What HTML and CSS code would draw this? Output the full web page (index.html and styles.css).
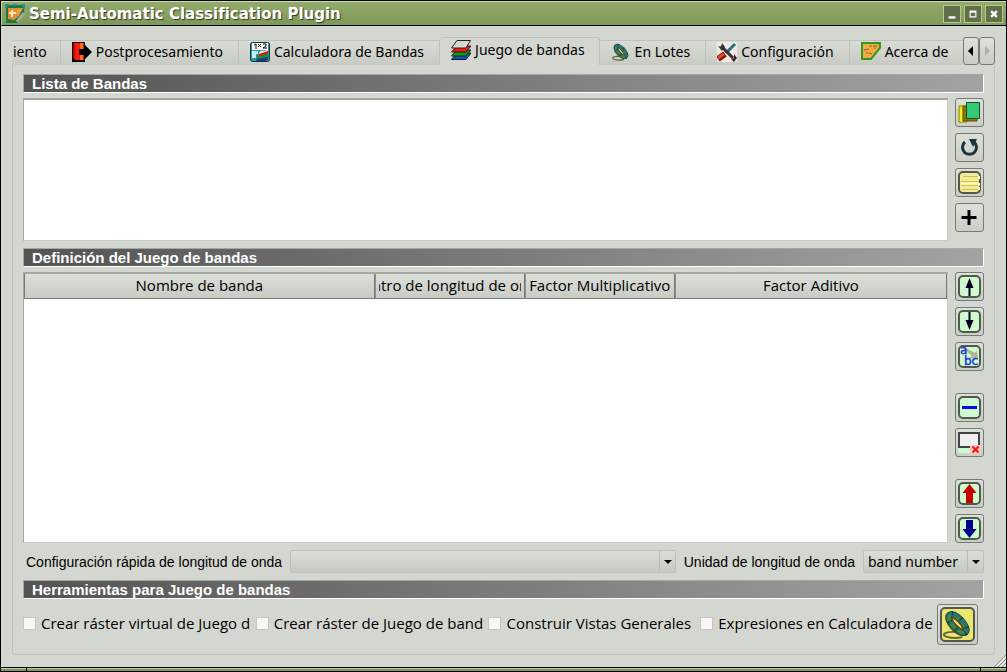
FILE: index.html
```html
<!DOCTYPE html>
<html lang="es">
<head>
<meta charset="utf-8">
<title>Semi-Automatic Classification Plugin</title>
<link rel="stylesheet" href="styles.css">
</head>
<body>
<svg class="defs" aria-hidden="true">
  <defs>
    <linearGradient id="door"><stop offset="0" stop-color="#b00000"/><stop offset=".35" stop-color="#ff2010"/><stop offset="1" stop-color="#e01000"/></linearGradient>
    <symbol id="chain" viewBox="0 0 34 34">
      <path d="M22 30c-9 2-20 0-19-3 1-2 8-3 15-2" fill="none" stroke="#66663f" stroke-width="2"/>
      <g transform="rotate(47 17 16)" fill="none">
        <ellipse cx="17" cy="17" rx="12" ry="5" stroke="#a33f16" stroke-width="6"/>
        <ellipse cx="17" cy="16" rx="12" ry="5" stroke="#1c5245" stroke-width="7"/>
        <ellipse cx="17" cy="16" rx="12" ry="5" stroke="#28727c" stroke-width="5"/>
        <ellipse cx="17" cy="17" rx="11" ry="4" stroke="#3b8f2c" stroke-width="3" stroke-dasharray="7 3"/>
        <ellipse cx="17" cy="16" rx="12" ry="5" stroke="#173c36" stroke-width="7" stroke-dasharray="1 9"/>
        <ellipse cx="17" cy="16" rx="9" ry="2" stroke="#7c3a16" stroke-width="1"/>
      </g>
    </symbol>
  </defs>
</svg>
<div class="window">
  <header class="titlebar">
    <svg class="app-icon" viewBox="0 0 20 20"><path d="M1 1h18v10l-6 8H1z" fill="#24763b"/><path d="M1 4V1h3M8 1h4M16 1h3v4" fill="none" stroke="#1b91a4" stroke-width="2"/><path d="M3 4h15l-4 8-5 4-6-1z" fill="#dd913b"/><path d="M7 6v7M4 9h7" stroke="#ffe5b4" stroke-width="2"/><path d="M12 7l4-1M12 9l2 1" stroke="#f6c35d" stroke-width="1"/><path d="M19 9l-7 9" stroke="#a3aca0" stroke-width="3"/></svg>
    <h1 class="title">Semi-Automatic Classification Plugin</h1>
    <div class="window-buttons">
      <button class="wbtn" aria-label="Minimizar"><svg viewBox="0 0 14 14"><path d="M4 9h6v2H4z" fill="#fff"/></svg></button>
      <button class="wbtn" aria-label="Maximizar"><svg viewBox="0 0 14 14"><path d="M4 4h6v6H4zM5 6v3h4V6z" fill="#fff" fill-rule="evenodd"/></svg></button>
      <button class="wbtn" aria-label="Cerrar"><svg viewBox="0 0 14 14"><path d="M4.500 4.500l5 5M9.500 4.500l-5 5" stroke="#fff" stroke-width="2"/></svg></button>
    </div>
  </header>

  <main class="content">
    <nav class="tabbar">
      <div class="tabs" role="tablist">
        <button class="tab tab-cut" role="tab">iento</button>
        <button class="tab" role="tab"><svg class="tab-icon" viewBox="0 0 20 20"><path d="M0 0h13v20H0z" fill="#000"/><path d="M1 1h11v17H3L1 16z" fill="url(#door)"/><path d="M8 1h3v17H8z" fill="#ff6a1c"/><path d="M7 7h6V3l7 7-7 7v-4H7z" fill="#000"/></svg>Postprocesamiento</button>
        <button class="tab" role="tab"><svg class="tab-icon" viewBox="0 0 20 20"><rect x=".5" y=".5" width="19" height="19" rx="2" fill="#2b93a9" stroke="#14343e"/><path d="M2 1h16v7H2z" fill="#f6f7ee"/><path d="M4 3l2-1v5M8 2l3 3M11 2L8 5M13 2h3v2l-3 2h4" fill="none" stroke="#111"/><path d="M2 9h6v3H6v4H2z" fill="#c5edf3"/><path d="M10 9l8-1v4l-3 2H8z" fill="#e8e8e8"/><path d="M9 12l9-3v3l-3 3H7z" fill="#c82118"/><path d="M8 14l10-2v3l-4 2H6z" fill="#228a2c"/><path d="M7 17l11-2v3l-3 1H6z" fill="#143e91"/></svg>Calculadora de Bandas</button>
        <button class="tab tab-active" role="tab" aria-selected="true"><svg class="tab-icon" viewBox="0 0 20 20"><path d="M6 13h14l-5 6.500H.5z" fill="#1553b5" stroke="#071c3c"/><path d="M6 10h14l-5 6H.5z" fill="#139a20" stroke="#06320b"/><path d="M6 6h14l-5 6H.5z" fill="#ee1c16" stroke="#4b0b09"/><path d="M6 .5h13.500L15 8H.5z" fill="#d6d8d5" stroke="#222"/></svg>Juego de bandas</button>
        <button class="tab" role="tab"><svg class="tab-icon" viewBox="0 0 34 34"><use href="#chain"/></svg>En Lotes</button>
        <button class="tab" role="tab"><svg class="tab-icon" viewBox="0 0 20 20"><rect width="20" height="20" fill="#efe8e4"/><path d="M18 2L9 11" stroke="#267278" stroke-width="3"/><path d="M4 4l12 12" stroke="#3a2c30" stroke-width="3"/><path d="M1 4l3 1 1-4 3 4-3 4zM14 17l3-1v-4l3 4-3 4z" fill="#3a2c30"/><path d="M8 12l-7 5" stroke="#7b170e" stroke-width="6"/><path d="M7 12l-6 4" stroke="#df4d1c" stroke-width="3"/></svg>Configuración</button>
        <button class="tab tab-last" role="tab"><svg class="tab-icon" viewBox="0 0 20 20"><path d="M1 1h18v5l-9 11H1z" fill="#f0ac43" stroke="#35951d" stroke-width="2"/><path d="M3 8l5-1M8 4h3M12 4h4M5 11h2M8 11l3 1M13 6h2" stroke="#88653a" stroke-width="1"/></svg>Acerca de</button>
      </div>
      <button class="scroll" aria-label="Pestañas anteriores"><svg viewBox="0 0 8 10"><path d="M6 0v10L1 5z"/></svg></button>
      <button class="scroll" aria-label="Pestañas siguientes" disabled><svg viewBox="0 0 8 10"><path d="M2 0v10l5-5z" fill="#aeb1a9"/></svg></button>
    </nav>

    <section class="panel">
      <h2 class="section-title">Lista de Bandas</h2>
      <div class="block list-block">
        <div class="view" role="listbox" aria-label="Lista de Bandas"></div>
        <div class="tools">
          <button class="tool" aria-label="Seleccionar todo"><svg viewBox="0 0 23 23"><path d="M1 5h8v16H1z" fill="#e9e600" stroke="#8a8300"/><path d="M3 9v12" stroke="#fff76a"/><path d="M5 5h14v15H5z" fill="#8b7700" stroke="#5f5100"/><path d="M8.500 1.500h13v16h-13z" fill="#38c774" stroke="#13522e"/></svg></button>
          <button class="tool" aria-label="Actualizar"><svg viewBox="0 0 23 23"><path d="M7 6a7 7 0 1 0 9 0" fill="none" stroke="#1d333b" stroke-width="3"/><path d="M11 3h8l-4 8z" fill="#1d333b"/></svg></button>
          <button class="tool" aria-label="Añadir bandas"><svg viewBox="0 0 23 23"><rect x="1" y="1" width="21" height="21" rx="4" fill="#f2ec98" stroke="#55564e" stroke-width="2"/><path d="M5 5.500h15M3 10.500h18M3 14.500h17M4 18.500h16" stroke="#d3bd4c" stroke-width="1"/><path d="M3 12.500h16M21 5v3M21 12v3M21 16v3" stroke="#fffab9" stroke-width="2"/></svg></button>
          <button class="tool" aria-label="Añadir"><svg viewBox="0 0 23 23"><path d="M11 4v15M3.500 11.500h15" stroke="#000" stroke-width="3"/></svg></button>
        </div>
      </div>

      <h2 class="section-title">Definición del Juego de bandas</h2>
      <div class="block table-block">
        <div class="view">
          <table class="bands">
            <thead><tr>
              <th class="col-name"><div class="th-text"><span>Nombre de banda</span></div></th>
              <th class="col-mid"><div class="th-text"><span>Centro de longitud de onda</span></div></th>
              <th class="col-mid"><div class="th-text"><span>Factor Multiplicativo</span></div></th>
              <th><div class="th-text"><span>Factor Aditivo</span></div></th>
            </tr></thead>
          </table>
        </div>
        <div class="tools tools-split">
          <div class="tool-group">
            <button class="tool" aria-label="Subir banda"><svg viewBox="0 0 23 23"><rect class="mint" x="1" y="1" width="21" height="21" rx="4"/><path d="M11.500 21V8" stroke="#000022" stroke-width="2"/><path d="M11.500 3l4 10h-8z" fill="#000022"/></svg></button>
            <button class="tool" aria-label="Bajar banda"><svg viewBox="0 0 23 23"><rect class="mint" x="1" y="1" width="21" height="21" rx="4"/><path d="M11.500 2v13" stroke="#000022" stroke-width="2"/><path d="M11.500 20l4-10h-8z" fill="#000022"/></svg></button>
            <button class="tool" aria-label="Ordenar por nombre"><svg viewBox="0 0 23 23"><rect class="mint" x="1" y="1" width="21" height="21" rx="4"/><path d="M8 3l9 5 2-3 1 9-9-1 3-2-7-6z" fill="#b3b49b"/><text x="2" y="9" class="abc">a</text><text x="6" y="20" class="abc">bc</text></svg></button>
          </div>
          <div class="tool-group">
            <button class="tool" aria-label="Quitar banda"><svg viewBox="0 0 23 23"><rect class="mint" x="1" y="1" width="21" height="21" rx="4"/><path d="M4 11.500h15" stroke="#0808f2" stroke-width="3"/></svg></button>
            <button class="tool" aria-label="Borrar todo"><svg viewBox="0 0 23 23"><path d="M0 16h12v6H0z" fill="#cdf9cd"/><path d="M1 2h20v14H1z" fill="#f0f0f0" stroke="#444" stroke-width="2"/><path d="M12 14h11v9H12z" fill="#fac6b8"/><path d="M14.500 15.500l6 6M20.500 15.500l-6 6" stroke="#e71b1b" stroke-width="2"/></svg></button>
          </div>
          <div class="tool-group">
            <button class="tool" aria-label="Importar"><svg viewBox="0 0 23 23"><rect class="mint" x="1" y="1" width="21" height="21" rx="4"/><path d="M11.500 2l7 9H15v10H8V11H4.500z" fill="#c40000"/></svg></button>
            <button class="tool" aria-label="Exportar"><svg viewBox="0 0 23 23"><rect class="mint" x="1" y="1" width="21" height="21" rx="4"/><path d="M11.500 21l7-9H15V3H8v9H4.500z" fill="#000090"/></svg></button>
          </div>
        </div>
      </div>

      <div class="settings">
        <label for="quick">Configuración rápida de longitud de onda</label>
        <span class="combo combo-wide"><select id="quick"><option></option></select></span>
        <label for="unit">Unidad de longitud de onda</label>
        <span class="combo combo-unit"><select id="unit"><option>band number</option></select></span>
      </div>

      <h2 class="section-title">Herramientas para Juego de bandas</h2>
      <div class="actions">
        <div class="checks">
          <label class="check"><input type="checkbox">Crear ráster virtual de Juego d</label>
          <label class="check"><input type="checkbox">Crear ráster de Juego de band</label>
          <label class="check"><input type="checkbox">Construir Vistas Generales</label>
          <label class="check"><input type="checkbox">Expresiones en Calculadora de</label>
        </div>
        <button class="tool run" aria-label="Ejecutar"><svg viewBox="0 0 35 35"><rect x="1" y="1" width="33" height="33" rx="4" fill="#ebe66e" stroke="#55564e" stroke-width="2"/><use href="#chain" x="1" y="1" width="33" height="33"/></svg></button>
      </div>
    </section>
    <svg class="grip" viewBox="0 0 12 12"><path d="M0 12L12 0M4 12l8-8M8 12l4-4" stroke="#8d9089"/><path d="M2 12L12 2M6 12l6-6M10 12l2-2" stroke="#fff"/></svg>
  </main>
  <footer class="frame-bottom"><span></span><span></span><span></span></footer>
</div>
</body>
</html>
```
FILE: styles.css
```css
* { box-sizing: border-box; }
body { margin: 0; background: #d4d7d0; color: #000; font-family: "Open Sans", "Noto Sans", sans-serif; font-size: 15px; }
button { margin: 0; padding: 0; font: inherit; color: inherit; }
svg { display: block; }
.defs { position: absolute; width: 0; height: 0; }
.window { display: flex; flex-direction: column; min-height: 100vh; border: 1px solid #000; background: #d4d7d0; }

.titlebar { display: flex; align-items: center; height: 25px; padding: 0 3px; gap: 4px; border-top: 1px solid #c9dda4; border-bottom: 1px solid #000; border-left: 1px solid #b8d18f; background: linear-gradient(#93ab6c, #7e985b); }
.app-icon { width: 20px; height: 20px; }
.title { flex: 1; margin: 0; color: #fff; font: bold 15px/20px "DejaVu Sans", sans-serif; text-shadow: 1px 1px 1px #333b25; }
.window-buttons { display: flex; gap: 3px; }
.wbtn { width: 18px; height: 18px; border: 1px solid #b3cc8c; background: #606f49; }
.wbtn svg { width: 16px; height: 16px; }

.content { position: relative; flex: 1; display: flex; flex-direction: column; padding: 11px 11px 12px; }
.tabbar { display: flex; align-items: flex-end; height: 28px; }
.tabs { flex: 1; min-width: 0; display: flex; align-items: flex-end; height: 28px; overflow: hidden; }
.tab { flex: none; display: flex; align-items: center; gap: 4px; height: 25px; padding: 0 15px 3px 11px; border: 0; border-top: 1px solid #bfc2ba; border-right: 1px solid #bfc2ba; background: linear-gradient(#d9dcd5, #c8cbc3); white-space: nowrap; font: 14px/20px "Noto Sans", sans-serif; }
.tab-icon { width: 20px; height: 20px; }
.tab-cut { padding: 0 13px 3px 1px; }
.tab-active { height: 28px; padding: 0 14px 4px 11px; border-radius: 3px 3px 0 0; background: #d4d7d0; }
.tab-last { border-right: 0; }
.scroll { flex: none; display: flex; align-items: center; justify-content: center; width: 16px; height: 28px; border: 1px solid #777a73; border-radius: 3px; background: linear-gradient(#dfe2da, #c8cbc3); }
.scroll svg { width: 8px; height: 10px; }

.panel { flex: 1; display: flex; flex-direction: column; padding: 9px 10px 9px; border: 1px solid #c1c4bc; border-top: 0; border-radius: 0 0 3px 3px; }
.section-title { flex: none; height: 19px; margin: 0; padding-left: 8px; border: 1px solid #a5a8a0; border-right-color: #fff; border-bottom-color: #fff; background: linear-gradient(90deg, #545454, #a3a3a3); color: #fff; font: bold 15px/17px "Liberation Sans", Arial, sans-serif; }
.block { display: flex; gap: 7px; margin: 5px 0 7px; }
.list-block { flex: 143 0 143px; }
.table-block { flex: 271 0 271px; }
.view { flex: 1; min-width: 0; border: 1px solid #a5a8a0; border-top-width: 2px; border-right-color: #c9ccc5; border-bottom-color: #c9ccc5; background: #fff; }
.tools { display: flex; flex-direction: column; gap: 6px; }
.tools-split { justify-content: space-between; }
.tool-group { display: flex; flex-direction: column; gap: 6px; }
.tool { display: flex; align-items: center; justify-content: center; width: 29px; height: 29px; border: 1px solid #777a73; border-radius: 3px; background: linear-gradient(#dde0d9, #cbcec6); }
.tool svg { width: 23px; height: 23px; }
.mint { fill: #cffacf; stroke: #4f5a4f; stroke-width: 2px; }
.abc { fill: #1834d8; stroke: #1834d8; stroke-width: 0.4px; font: 12px "DejaVu Sans", sans-serif; }

.bands { width: 100%; border-collapse: separate; border-spacing: 0; table-layout: fixed; }
.bands th { height: 25px; padding: 0 3px 2px; border: 1px solid #777a73; border-top: 0; background: linear-gradient(#dcdfd8, #c9ccc4); font-weight: normal; line-height: 20px; }
.bands th + th { border-left-color: #8f928a; }
.col-name { width: 38%; }
.col-mid { width: 150px; }
.th-text { display: flex; justify-content: center; overflow: hidden; white-space: nowrap; }

.settings { display: flex; align-items: center; gap: 8px; height: 23px; margin-bottom: 7px; padding-left: 3px; font: 14px/20px "Liberation Sans", Arial, sans-serif; }
.combo { position: relative; display: flex; height: 23px; }
.combo-wide { flex: 1; }
.combo-unit { width: 121px; }
.combo select { width: 100%; height: 23px; padding: 0 4px; appearance: none; border: 1px solid #bdc0b8; border-radius: 2px; background: linear-gradient(#dcdfd8, #c6c9c1); color: #000; font: 14px/20px "Noto Sans", sans-serif; }
.combo::before { content: ""; position: absolute; right: 16px; top: 1px; bottom: 1px; border-left: 1px solid #b9bcb4; }
.combo::after { content: ""; position: absolute; right: 4px; top: 10px; border: 4px solid transparent; border-top-color: #000; border-bottom: 0; }

.actions { display: flex; align-items: center; justify-content: space-between; margin-top: 5px; padding-right: 6px; }
.checks { flex: 1; display: grid; grid-template-columns: 233fr 233fr 212fr 237fr; padding-bottom: 3px; }
.check { display: flex; align-items: center; gap: 5px; min-width: 0; white-space: nowrap; line-height: 20px; }
.check input { flex: none; width: 13px; height: 13px; margin: 0; appearance: none; border: 1px solid #c4c7bf; background: #f7f8f6; }
.run { width: 41px; height: 41px; }
.run svg { width: 35px; height: 35px; }

.grip { position: absolute; right: 0; bottom: 0; width: 12px; height: 12px; }
.frame-bottom { display: grid; grid-template-columns: 25px 1fr 25px; gap: 1px; height: 4px; border-top: 1px solid #000; background: #000; }
.frame-bottom span { border-top: 1px solid #b8d18f; background: #7e985b; }
```
